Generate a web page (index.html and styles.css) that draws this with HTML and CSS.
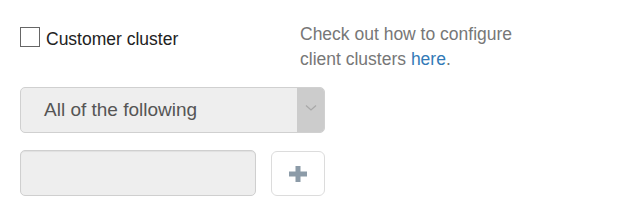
FILE: index.html
```html
<!DOCTYPE html>
<html>
<head>
<meta charset="utf-8">
<link rel="stylesheet" href="styles.css">
</head>
<body>
<div class="page">
  <div class="top">
    <label class="check">
      <input type="checkbox" class="box">
      <span>Customer cluster</span>
    </label>
    <p class="help">Check out how to configure<br>client clusters <a href="#">here</a>.</p>
  </div>
  <div class="select">
    <span class="select-text">All of the following</span>
    <span class="select-arrow">
      <svg width="12" height="8" viewBox="0 0 12 8"><path d="M1 1.5 L6 6 L11 1.5" fill="none" stroke="#a9a9a9" stroke-width="1.3"/></svg>
    </span>
  </div>
  <div class="add-row">
    <input class="field" type="text">
    <button class="add-btn" type="button">
      <svg width="18" height="16" viewBox="0 0 18 16"><rect x="0" y="5.5" width="18" height="5" fill="#8c9ba8"/><rect x="6.5" y="0" width="5" height="16" fill="#8c9ba8"/></svg>
    </button>
  </div>
</div>
</body>
</html>
```
FILE: styles.css
```css
html, body {
  margin: 0;
  padding: 0;
  background: #fff;
}
.page {
  padding: 22px 0 0 20px;
  font-family: "Liberation Sans", Arial, sans-serif;
  font-size: 17.5px;
  line-height: 25px;
}
.top {
  display: flex;
  align-items: flex-start;
}
.check {
  width: 280px;
  display: flex;
  align-items: flex-start;
  margin-top: 5px;
  color: #222;
}
.box {
  appearance: none;
  -webkit-appearance: none;
  width: 20px;
  height: 20px;
  margin: 0 6px 0 0;
  border: 1.5px solid #666;
  background: #fff;
  box-sizing: border-box;
}
.help {
  margin: 0;
  color: #777;
}
.help a {
  color: #337ab7;
  text-decoration: none;
}
.select {
  margin-top: 15px;
  width: 305px;
  height: 46px;
  box-sizing: border-box;
  border: 1px solid #d0d0d0;
  border-radius: 5px;
  background: #eeeeee;
  display: flex;
  overflow: hidden;
}
.select-text {
  flex: 1;
  padding-left: 23px;
  line-height: 44px;
  font-size: 19px;
  color: #555;
}
.select-arrow {
  width: 27px;
  background: #cccccc;
  display: flex;
  align-items: center;
  justify-content: center;
  padding-bottom: 4px;
  box-sizing: border-box;
}
.add-row {
  margin-top: 17px;
  display: flex;
  align-items: flex-start;
  gap: 15px;
}
.field {
  width: 236px;
  height: 46px;
  box-sizing: border-box;
  margin: 0;
  border: 1px solid #cfcfcf;
  border-radius: 5px;
  background: #eeeeee;
  box-shadow: inset 0 1px 1px rgba(0,0,0,0.06);
}
.add-btn {
  width: 54px;
  height: 45px;
  margin: 1px 0 0 0;
  padding: 0;
  box-sizing: border-box;
  border: 1px solid #dcdcdc;
  border-radius: 6px;
  background: #fff;
  display: flex;
  align-items: center;
  justify-content: center;
}
```
